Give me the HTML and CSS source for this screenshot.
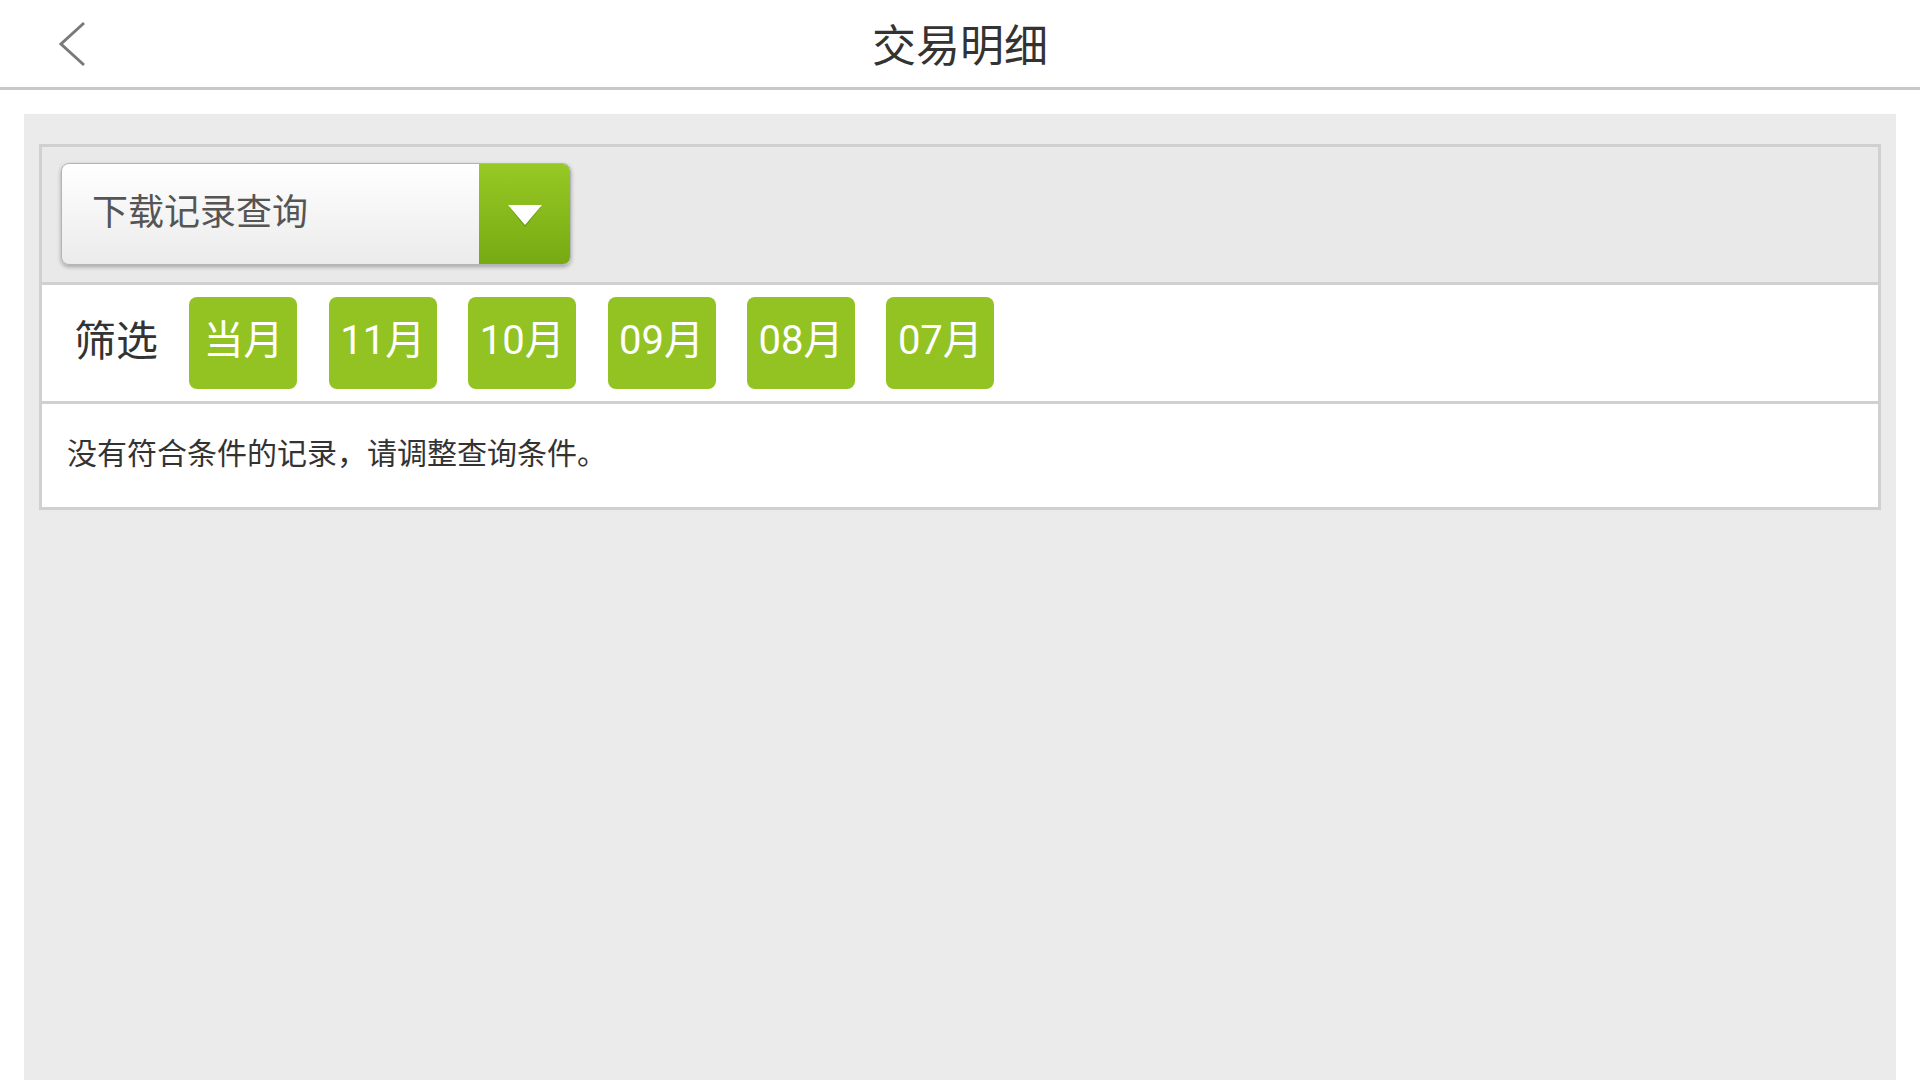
FILE: index.html
```html
<!DOCTYPE html>
<html lang="zh-CN">
<head>
    <meta charset="UTF-8">
    <meta name="viewport" content="width=device-width, initial-scale=1.0">
    <title>交易明细</title>
    <link rel="stylesheet" href="styles.css">
</head>
<body>
    <header class="topbar">
        <a class="back-btn" href="#">
            <svg width="30" height="48" viewBox="0 0 30 48">
                <path d="M27 3 L4 24 L27 45" fill="none" stroke="#7a7a7a" stroke-width="3"/>
            </svg>
        </a>
        <h1 class="page-title">交易明细</h1>
        <span></span>
    </header>

    <main class="panel">
        <div class="record-box">
            <div class="query-bar">
                <div class="select-box">
                    <span class="select-text">下载记录查询</span>
                    <span class="select-arrow">
                        <svg width="38" height="26" viewBox="0 0 38 26">
                            <path d="M3 4 L35 4 L19 24 Z" fill="#3f6a05" opacity="0.35"/>
                            <path d="M2 2 L36 2 L19 22 Z" fill="#ffffff"/>
                        </svg>
                    </span>
                </div>
            </div>

            <div class="filter-row">
                <span class="filter-label">筛选</span>
                <button class="month-btn">当月</button>
                <button class="month-btn">11月</button>
                <button class="month-btn">10月</button>
                <button class="month-btn">09月</button>
                <button class="month-btn">08月</button>
                <button class="month-btn">07月</button>
            </div>

            <!-- no records for the selected month -->
            <div class="empty-row">没有符合条件的记录，请调整查询条件。</div>
        </div>
    </main>
</body>
</html>
```

FILE: styles.css
```css
* {
    box-sizing: border-box;
}
body {
    margin: 0;
    background-color: #ffffff;
    font-family: Roboto, "Noto Sans CJK SC", sans-serif;
}
.topbar {
    height: 90px;
    border-bottom: 3px solid #c8c8c8;
    display: grid;
    grid-template-columns: 1fr auto 1fr;
    align-items: center;
}
.back-btn {
    display: flex;
    padding-left: 57px;
}
.page-title {
    margin: 0;
    padding-top: 6px;
    font-size: 44px;
    font-weight: 400;
    line-height: 1;
    color: #333333;
}
.panel {
    margin: 24px 24px 0;
    padding: 30px 15px;
    background-color: #ebebeb;
    min-height: calc(100vh - 114px);
}
.record-box {
    border: 3px solid #d0d0d0;
}
.query-bar {
    padding: 16px 19px 17px;
    background-color: #e9e9e9;
    border-bottom: 3px solid #d0d0d0;
}
.select-box {
    width: 510px;
    height: 102px;
    display: flex;
    border: 1px solid #b4b4b4;
    border-radius: 8px;
    overflow: hidden;
    background: linear-gradient(#ffffff, #ebebeb);
    box-shadow: 0 2px 4px rgba(0, 0, 0, 0.3);
}
.select-text {
    flex: 1;
    display: flex;
    align-items: center;
    padding: 0 0 10px 30px;
    font-size: 36px;
    color: #555555;
}
.select-arrow {
    width: 91px;
    display: flex;
    align-items: center;
    justify-content: center;
    padding-top: 4px;
    background: linear-gradient(#96c924, #77aa12);
}
.filter-row {
    display: flex;
    align-items: center;
    gap: 31.4px;
    padding: 12px 32px;
    background-color: #ffffff;
    border-bottom: 3px solid #d0d0d0;
}
.filter-label {
    padding-bottom: 12px;
    font-size: 42px;
    color: #333333;
}
.month-btn {
    width: 108px;
    height: 92px;
    padding: 0 0 13px;
    border: none;
    border-radius: 8px;
    background-color: #92c322;
    color: #ffffff;
    font-family: inherit;
    font-size: 40px;
    cursor: pointer;
}
.empty-row {
    height: 103px;
    display: flex;
    align-items: center;
    padding: 0 25px 10px;
    background-color: #ffffff;
    font-size: 30px;
    color: #333333;
}
```
